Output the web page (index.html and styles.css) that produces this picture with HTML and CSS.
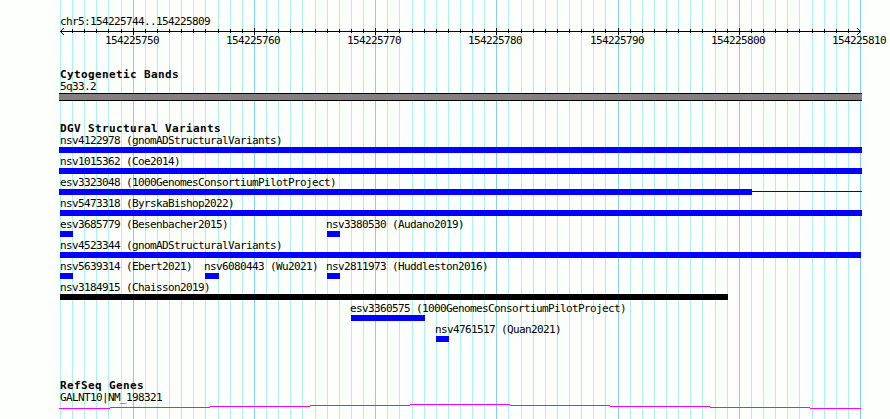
FILE: index.html
```html
<!DOCTYPE html>
<html lang="en">
<head>
  <meta charset="UTF-8" />
  <title>chr5:154225744..154225809</title>
  <link rel="stylesheet" href="styles.css">
</head>
<body>
  <div class="browser">
    <svg class="gridlines" id="gridlines" width="890" height="419" shape-rendering="crispEdges"></svg>

    <div class="region">chr5:154225744..154225809</div>
    <svg class="ruler" id="ruler" width="890" height="7" shape-rendering="crispEdges"></svg>
    <div class="ruler-labels" id="rulerLabels"></div>

    <div class="track cytobands">
      <h2>Cytogenetic Bands</h2>
      <div class="label">5q33.2</div>
      <div class="band"></div>
    </div>

    <div class="track variants">
      <h2>DGV Structural Variants</h2>
      <div id="variants"></div>
    </div>

    <div class="track genes">
      <h2>RefSeq Genes</h2>
      <div class="label">GALNT10|NM_198321</div>
      <svg class="gene" width="890" height="5" shape-rendering="crispEdges">
        <path d="M59 4.5H110M110 3.5H210M210 2.5H310M310 1.5H410M410 .5H510M510 1.5H610M610 2.5H710M710 3.5H810M810 4.5H861" />
      </svg>
    </div>
  </div>

  <script>
    const first = 154225744;
    const last = 154225810;
    const left = 60;
    const scale = 800 / 66;

    // each row: [name, start px, end px, colour class, end of thin line]
    const rows = [
      [["nsv4122978 (gnomADStructuralVariants)", 59, 862]],
      [["nsv1015362 (Coe2014)", 59, 862]],
      [["esv3323048 (1000GenomesConsortiumPilotProject)", 59, 752, "", 862]],
      [["nsv5473318 (ByrskaBishop2022)", 60, 862]],
      [["esv3685779 (Besenbacher2015)", 60, 73], ["nsv3380530 (Audano2019)", 327, 340]],
      [["nsv4523344 (gnomADStructuralVariants)", 60, 861]],
      [["nsv5639314 (Ebert2021)", 60, 73], ["nsv6080443 (Wu2021)", 205, 219], ["nsv2811973 (Huddleston2016)", 327, 340]],
      [["nsv3184915 (Chaisson2019)", 60, 728, "black"]],
      [["esv3360575 (1000GenomesConsortiumPilotProject)", 351, 425]],
      [["nsv4761517 (Quan2021)", 436, 449]]
    ];

    let lines = "";
    let ticks = '<path d="M60 3.5H861M63.5 0v1M62.5 1v1M61.5 2v1M60.5 3v1M61.5 4v1M62.5 5v1M63.5 6v1' +
                'M857.5 0v1M858.5 1v1M859.5 2v1M860.5 3v1M859.5 4v1M858.5 5v1M857.5 6v1" />';
    let labels = "";

    for (let pos = first; pos <= last; pos++) {
      const x = Math.round(left + (pos - first) * scale);
      const major = pos % 10 === 0;
      lines += `<path class="${major ? "major" : "minor"}" d="M${x + 0.5} 0V419" />`;
      if (pos > first && pos < last) {
        ticks += `<path d="M${x + 0.5} ${major ? "0V7" : "1V5"}" />`;
      }
      if (major) {
        labels += `<span style="margin-left: ${x - 28}px">${pos}</span>`;
      }
    }
    document.getElementById("gridlines").innerHTML = lines;
    document.getElementById("ruler").innerHTML = ticks;
    document.getElementById("rulerLabels").innerHTML = labels;

    document.getElementById("variants").innerHTML = rows.map(row => {
      const items = row.map(([name, start, end, color, lineEnd]) => {
        const textStart = start < 61 ? 60 : start - 1;
        const thin = lineEnd ? `<div class="thin" style="width: ${lineEnd - end}px"></div>` : "";
        return `<div class="label" style="margin-left: ${textStart}px">${name}</div>
          <div class="feature" style="margin-left: ${start}px">
            <div class="bar ${color || ""}" style="width: ${end - start}px"></div>${thin}
          </div>`;
      }).join("");
      return `<div class="row">${items}</div>`;
    }).join("");
  </script>
</body>
</html>
```

FILE: styles.css
```css
* { box-sizing: border-box; }
body {
  margin: 0;
  background: #fdfffc;
  color: #000;
  font-family: "DejaVu Sans Mono", monospace;
  font-size: 11px;
  line-height: 12px;
  letter-spacing: -0.62px;
  white-space: nowrap;
}
.browser {
  position: relative;
  width: 890px;
  height: 419px;
  padding-top: 16px;
  overflow: hidden;
}
.browser > * {
  position: relative;
}
.browser > .gridlines {
  position: absolute;
  top: 0;
  left: 0;
}
.minor { stroke: #afeeee; }
.major { stroke: #87ceeb; }
.region {
  padding-left: 60px;
}
.ruler {
  display: block;
  stroke: #000;
}
.ruler-labels {
  display: grid;
  height: 12px;
}
.ruler-labels span {
  grid-area: 1 / 1;
}
h2 {
  margin: 0;
  padding-left: 60px;
  font-size: 11px;
  line-height: 12px;
  letter-spacing: 0.38px;
}
.track > .label {
  padding-left: 60px;
}
.cytobands {
  margin-top: 22px;
}
.band {
  width: 803px;
  height: 8px;
  margin-left: 59px;
  background: #848082;
  border: solid #000;
  border-width: 1px 0;
}
.variants {
  margin-top: 22px;
}
.row {
  display: grid;
  grid-template-rows: 12px 6px;
  height: 21px;
}
.row .label {
  grid-area: 1 / 1;
}
.row .feature {
  grid-area: 2 / 1;
  display: flex;
}
.bar {
  height: 6px;
  background: #00f;
}
.bar.black {
  background: #000;
}
.thin {
  height: 1px;
  margin-top: 2px;
  background: #0000b4;
}
.genes {
  margin-top: 35px;
}
.gene {
  display: block;
  stroke: #f0f;
}
```
